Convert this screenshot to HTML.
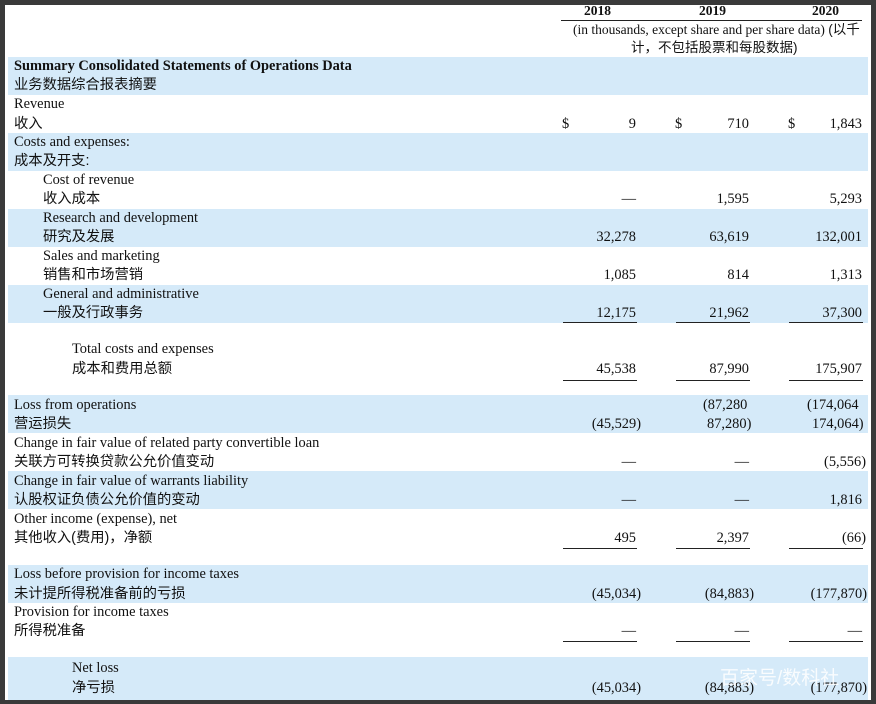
<!DOCTYPE html>
<html><head><meta charset="utf-8"><style>
body{margin:0;width:876px;height:704px;background:#3a3a3a;position:relative;overflow:hidden;font-family:"Liberation Serif","Noto Serif CJK SC",serif;font-size:14.4px;color:#111}
#pg{position:absolute;left:5px;top:5px;width:866px;height:695px;background:#fff}
.b{position:absolute;left:8px;width:860px;background:#d5eaf9}
.t{position:absolute;line-height:18px;white-space:nowrap}
.c{font-family:"Liberation Sans","Noto Sans CJK SC",sans-serif;font-size:14.3px}
.r{text-align:right;width:80px}
.u{position:absolute;height:1px;background:#222}
</style></head><body>
<div id="pg"></div>
<div class="b" style="top:57px;height:38px"></div>
<div class="b" style="top:133px;height:38px"></div>
<div class="b" style="top:209px;height:38px"></div>
<div class="b" style="top:285px;height:38px"></div>
<div class="b" style="top:395px;height:38px"></div>
<div class="b" style="top:471px;height:38px"></div>
<div class="b" style="top:565px;height:38px"></div>
<div class="b" style="top:657px;height:43px"></div>

<div class="t" style="left:584px;top:2px;font-weight:bold;font-size:13.5px">2018</div>
<div class="t" style="left:699px;top:2px;font-weight:bold;font-size:13.5px">2019</div>
<div class="t" style="left:812px;top:2px;font-weight:bold;font-size:13.5px">2020</div>
<div class="u" style="left:561px;top:20px;width:301px"></div>
<div class="t" style="left:573px;top:21px;font-size:13.5px">(in thousands, except share and per share data) <span class="c" style="font-size:13.5px">(以千</span></div>
<div class="t c" style="left:631px;top:39px;font-size:13.5px">计，不包括股票和每股数据)</div>

<div class="t" style="left:14px;top:57px;font-weight:bold">Summary Consolidated Statements of Operations Data</div>
<div class="t c" style="left:14px;top:76px">业务数据综合报表摘要</div>
<div class="t" style="left:14px;top:95px">Revenue</div>
<div class="t c" style="left:14px;top:115px">收入</div>
<div class="t" style="left:14px;top:133px">Costs and expenses:</div>
<div class="t c" style="left:14px;top:152px">成本及开支:</div>
<div class="t" style="left:43px;top:171px">Cost of revenue</div>
<div class="t c" style="left:43px;top:190px">收入成本</div>
<div class="t" style="left:43px;top:209px">Research and development</div>
<div class="t c" style="left:43px;top:228px">研究及发展</div>
<div class="t" style="left:43px;top:247px">Sales and marketing</div>
<div class="t c" style="left:43px;top:266px">销售和市场营销</div>
<div class="t" style="left:43px;top:285px">General and administrative</div>
<div class="t c" style="left:43px;top:304px">一般及行政事务</div>
<div class="t" style="left:72px;top:340px">Total costs and expenses</div>
<div class="t c" style="left:72px;top:360px">成本和费用总额</div>
<div class="t" style="left:14px;top:396px">Loss from operations</div>
<div class="t c" style="left:14px;top:415px">营运损失</div>
<div class="t" style="left:14px;top:434px">Change in fair value of related party convertible loan</div>
<div class="t c" style="left:14px;top:453px">关联方可转换贷款公允价值变动</div>
<div class="t" style="left:14px;top:472px">Change in fair value of warrants liability</div>
<div class="t c" style="left:14px;top:491px">认股权证负债公允价值的变动</div>
<div class="t" style="left:14px;top:510px">Other income (expense), net</div>
<div class="t c" style="left:14px;top:529px">其他收入(费用)，净额</div>
<div class="t" style="left:14px;top:565px">Loss before provision for income taxes</div>
<div class="t c" style="left:14px;top:585px">未计提所得税准备前的亏损</div>
<div class="t" style="left:14px;top:603px">Provision for income taxes</div>
<div class="t c" style="left:14px;top:622px">所得税准备</div>
<div class="t" style="left:72px;top:659px">Net loss</div>
<div class="t c" style="left:72px;top:679px">净亏损</div>

<div class="t" style="left:562px;top:115px">$</div>
<div class="t" style="left:675px;top:115px">$</div>
<div class="t" style="left:788px;top:115px">$</div>
<div class="t r" style="left:556px;top:115px">9</div>
<div class="t r" style="left:669px;top:115px">710</div>
<div class="t r" style="left:782px;top:115px">1,843</div>

<div class="t r" style="left:556px;top:190px">—</div>
<div class="t r" style="left:669px;top:190px">1,595</div>
<div class="t r" style="left:782px;top:190px">5,293</div>
<div class="t r" style="left:556px;top:228px">32,278</div>
<div class="t r" style="left:669px;top:228px">63,619</div>
<div class="t r" style="left:782px;top:228px">132,001</div>
<div class="t r" style="left:556px;top:266px">1,085</div>
<div class="t r" style="left:669px;top:266px">814</div>
<div class="t r" style="left:782px;top:266px">1,313</div>
<div class="t r" style="left:556px;top:304px">12,175</div>
<div class="t r" style="left:669px;top:304px">21,962</div>
<div class="t r" style="left:782px;top:304px">37,300</div>
<div class="u" style="left:563px;top:322px;width:74px"></div>
<div class="u" style="left:676px;top:322px;width:74px"></div>
<div class="u" style="left:789px;top:322px;width:74px"></div>
<div class="t r" style="left:556px;top:360px">45,538</div>
<div class="t r" style="left:669px;top:360px">87,990</div>
<div class="t r" style="left:782px;top:360px">175,907</div>
<div class="u" style="left:563px;top:380px;width:74px"></div>
<div class="u" style="left:676px;top:380px;width:74px"></div>
<div class="u" style="left:789px;top:380px;width:74px"></div>
<div class="t r" style="left:561px;top:415px">(45,529)</div>
<div class="t" style="left:703px;top:396px">(87,280</div>
<div class="t" style="left:707px;top:415px">87,280)</div>
<div class="t" style="left:807px;top:396px">(174,064</div>
<div class="t" style="left:812px;top:415px">174,064)</div>
<div class="t r" style="left:556px;top:453px">—</div>
<div class="t r" style="left:669px;top:453px">—</div>
<div class="t r" style="left:786px;top:453px">(5,556)</div>
<div class="t r" style="left:556px;top:491px">—</div>
<div class="t r" style="left:669px;top:491px">—</div>
<div class="t r" style="left:782px;top:491px">1,816</div>
<div class="t r" style="left:556px;top:529px">495</div>
<div class="t r" style="left:669px;top:529px">2,397</div>
<div class="t r" style="left:786px;top:529px">(66)</div>
<div class="u" style="left:563px;top:548px;width:74px"></div>
<div class="u" style="left:676px;top:548px;width:74px"></div>
<div class="u" style="left:789px;top:548px;width:74px"></div>
<div class="t r" style="left:561px;top:585px">(45,034)</div>
<div class="t r" style="left:674px;top:585px">(84,883)</div>
<div class="t r" style="left:787px;top:585px">(177,870)</div>
<div class="t r" style="left:556px;top:622px">—</div>
<div class="t r" style="left:669px;top:622px">—</div>
<div class="t r" style="left:782px;top:622px">—</div>
<div class="u" style="left:563px;top:641px;width:74px"></div>
<div class="u" style="left:676px;top:641px;width:74px"></div>
<div class="u" style="left:789px;top:641px;width:74px"></div>
<div class="t r" style="left:561px;top:679px">(45,034)</div>
<div class="t r" style="left:674px;top:679px">(84,883)</div>
<div class="t r" style="left:787px;top:679px">(177,870)</div>
<div class="t c" style="left:720px;top:667px;font-size:19px;line-height:24px;color:rgba(255,255,255,0.85)">百家号/数科社</div>
</body></html>
